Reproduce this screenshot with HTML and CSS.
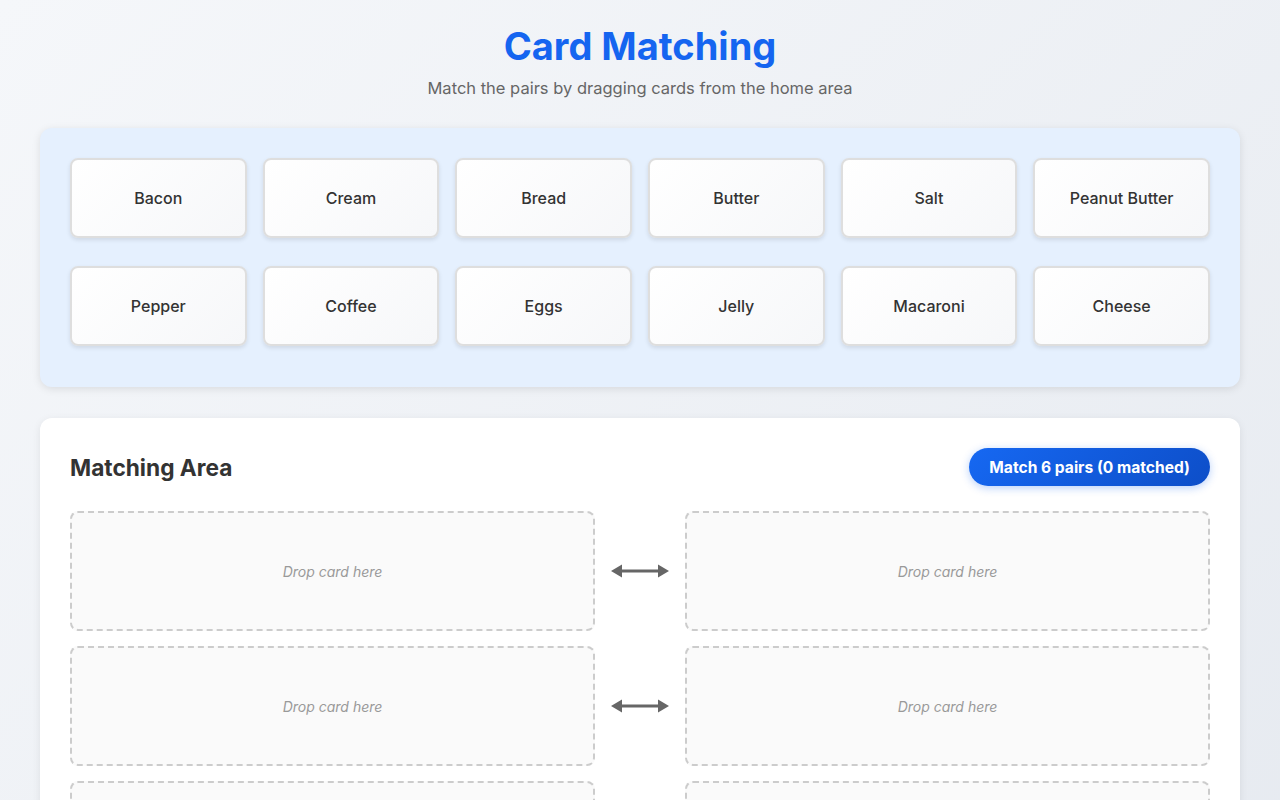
FILE: index.html
```html
<!DOCTYPE html>
<html lang="en">
<head>
<meta charset="utf-8">
<title>Card Matching</title>
<link rel="stylesheet" href="styles.css">
</head>
<body>
<div class="container">
  <header class="page-header">
    <h1 class="title">Card Matching</h1>
    <p class="subtitle">Match the pairs by dragging cards from the home area</p>
  </header>

  <section class="home-area">
    <div class="card">Bacon</div>
    <div class="card">Cream</div>
    <div class="card">Bread</div>
    <div class="card">Butter</div>
    <div class="card">Salt</div>
    <div class="card">Peanut Butter</div>
    <div class="card">Pepper</div>
    <div class="card">Coffee</div>
    <div class="card">Eggs</div>
    <div class="card">Jelly</div>
    <div class="card">Macaroni</div>
    <div class="card">Cheese</div>
  </section>

  <section class="matching-area">
    <div class="matching-header">
      <h2 class="matching-title">Matching Area</h2>
      <div class="badge">Match 6 pairs (0 matched)</div>
    </div>
    <div class="pairs">
      <div class="pair-row">
        <div class="drop-zone">Drop card here</div>
        <div class="connector"><svg width="60" height="16" viewBox="0 0 60 16"><path d="M10 8H50" stroke="#666" stroke-width="3"/><path d="M1 8L12 1.5V14.5Z" fill="#666"/><path d="M59 8L48 1.5V14.5Z" fill="#666"/></svg></div>
        <div class="drop-zone">Drop card here</div>
      </div>
      <div class="pair-row">
        <div class="drop-zone">Drop card here</div>
        <div class="connector"><svg width="60" height="16" viewBox="0 0 60 16"><path d="M10 8H50" stroke="#666" stroke-width="3"/><path d="M1 8L12 1.5V14.5Z" fill="#666"/><path d="M59 8L48 1.5V14.5Z" fill="#666"/></svg></div>
        <div class="drop-zone">Drop card here</div>
      </div>
      <div class="pair-row">
        <div class="drop-zone">Drop card here</div>
        <div class="connector"><svg width="60" height="16" viewBox="0 0 60 16"><path d="M10 8H50" stroke="#666" stroke-width="3"/><path d="M1 8L12 1.5V14.5Z" fill="#666"/><path d="M59 8L48 1.5V14.5Z" fill="#666"/></svg></div>
        <div class="drop-zone">Drop card here</div>
      </div>
    </div>
  </section>
</div>
</body>
</html>
```

FILE: styles.css
```css
* { box-sizing: border-box; }
html, body { margin: 0; padding: 0; }
body {
  font-family: Inter, "Noto Sans", sans-serif;
  background: linear-gradient(135deg, #f5f7fa 0%, #e6eaf0 100%);
  min-height: 100vh;
  color: #333;
  padding: 22px 40px 20px;
}
.container {
  max-width: 1200px;
  margin: 0 auto;
}
.page-header {
  text-align: center;
  margin-bottom: 28px;
}
.title {
  margin: 0;
  font-size: 38px;
  font-weight: 700;
  color: #1565f0;
  line-height: 48px;
}
.subtitle {
  margin: 6px 0 0;
  font-size: 16.5px;
  color: #666;
  line-height: 24px;
}
.home-area {
  background: #e5f0fe;
  border-radius: 12px;
  padding: 30px 30px 41px;
  display: grid;
  grid-template-columns: repeat(6, 1fr);
  column-gap: 16px;
  row-gap: 28px;
  box-shadow: 0 2px 8px rgba(0,0,0,0.1);
  margin-bottom: 31px;
}
.card {
  height: 80px;
  display: flex;
  align-items: center;
  justify-content: center;
  background: linear-gradient(135deg, #ffffff 0%, #f6f7f9 100%);
  border: 2px solid #dedede;
  border-radius: 8px;
  box-shadow: 0 2px 4px rgba(0,0,0,0.1);
  font-size: 16px;
  font-weight: 500;
  color: #333;
}
.matching-area {
  background: #fff;
  border-radius: 12px;
  padding: 30px;
  box-shadow: 0 2px 8px rgba(0,0,0,0.08);
}
.matching-header {
  display: flex;
  justify-content: space-between;
  align-items: center;
  height: 38px;
  margin-bottom: 25px;
}
.matching-title {
  margin: 0;
  font-size: 22.7px;
  font-weight: 700;
  color: #333;
}
.badge {
  height: 38px;
  padding: 0 20px;
  display: flex;
  align-items: center;
  border-radius: 19px;
  background: linear-gradient(135deg, #1668f2 0%, #0d4ec8 100%);
  color: #fff;
  font-weight: 700;
  font-size: 15.6px;
  box-shadow: 0 2px 8px rgba(21,101,240,0.3);
}
.pairs {
  display: flex;
  flex-direction: column;
  gap: 15px;
}
.pair-row {
  display: flex;
  align-items: center;
}
.drop-zone {
  flex: 1;
  height: 120px;
  display: flex;
  align-items: center;
  justify-content: center;
  border: 2px dashed #cccccc;
  border-radius: 8px;
  background: #fafafa;
  color: #999;
  font-style: italic;
  font-size: 14px;
}
.connector {
  width: 90px;
  display: flex;
  justify-content: center;
}
.connector svg { display: block; }
```
